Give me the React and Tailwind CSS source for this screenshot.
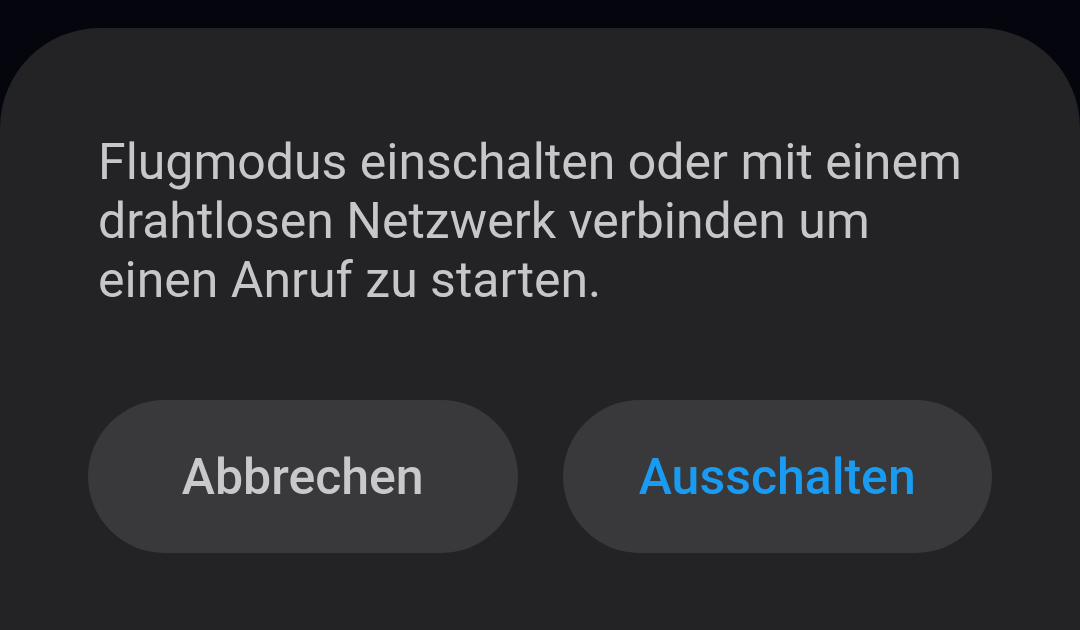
import React from 'react';

export default function App() {
  return (
    <div className="w-[1080px] h-[630px] overflow-hidden bg-[#05050e] pt-[28px]" style={{ fontFamily: 'Roboto, "Noto Sans", sans-serif' }}>
      <div className="h-[700px] bg-[#232325] rounded-t-[100px] px-[88px] pt-[105px]">
        <p className="px-[10px] text-[#c7c7c9] text-[50px] leading-[59px]">
          Flugmodus einschalten oder mit einem drahtlosen Netzwerk verbinden um einen Anruf zu starten.
        </p>

        <div className="grid grid-cols-2 gap-[45px] mt-[90px]">
          <button className="h-[153px] rounded-full bg-[#39393b] text-[#c9c9cb] text-[50px] font-medium pt-[2px]">
            Abbrechen
          </button>
          <button className="h-[153px] rounded-full bg-[#39393b] text-[#1a9bf2] text-[50px] font-medium pt-[2px]">
            Ausschalten
          </button>
        </div>
      </div>
    </div>
  );
}
